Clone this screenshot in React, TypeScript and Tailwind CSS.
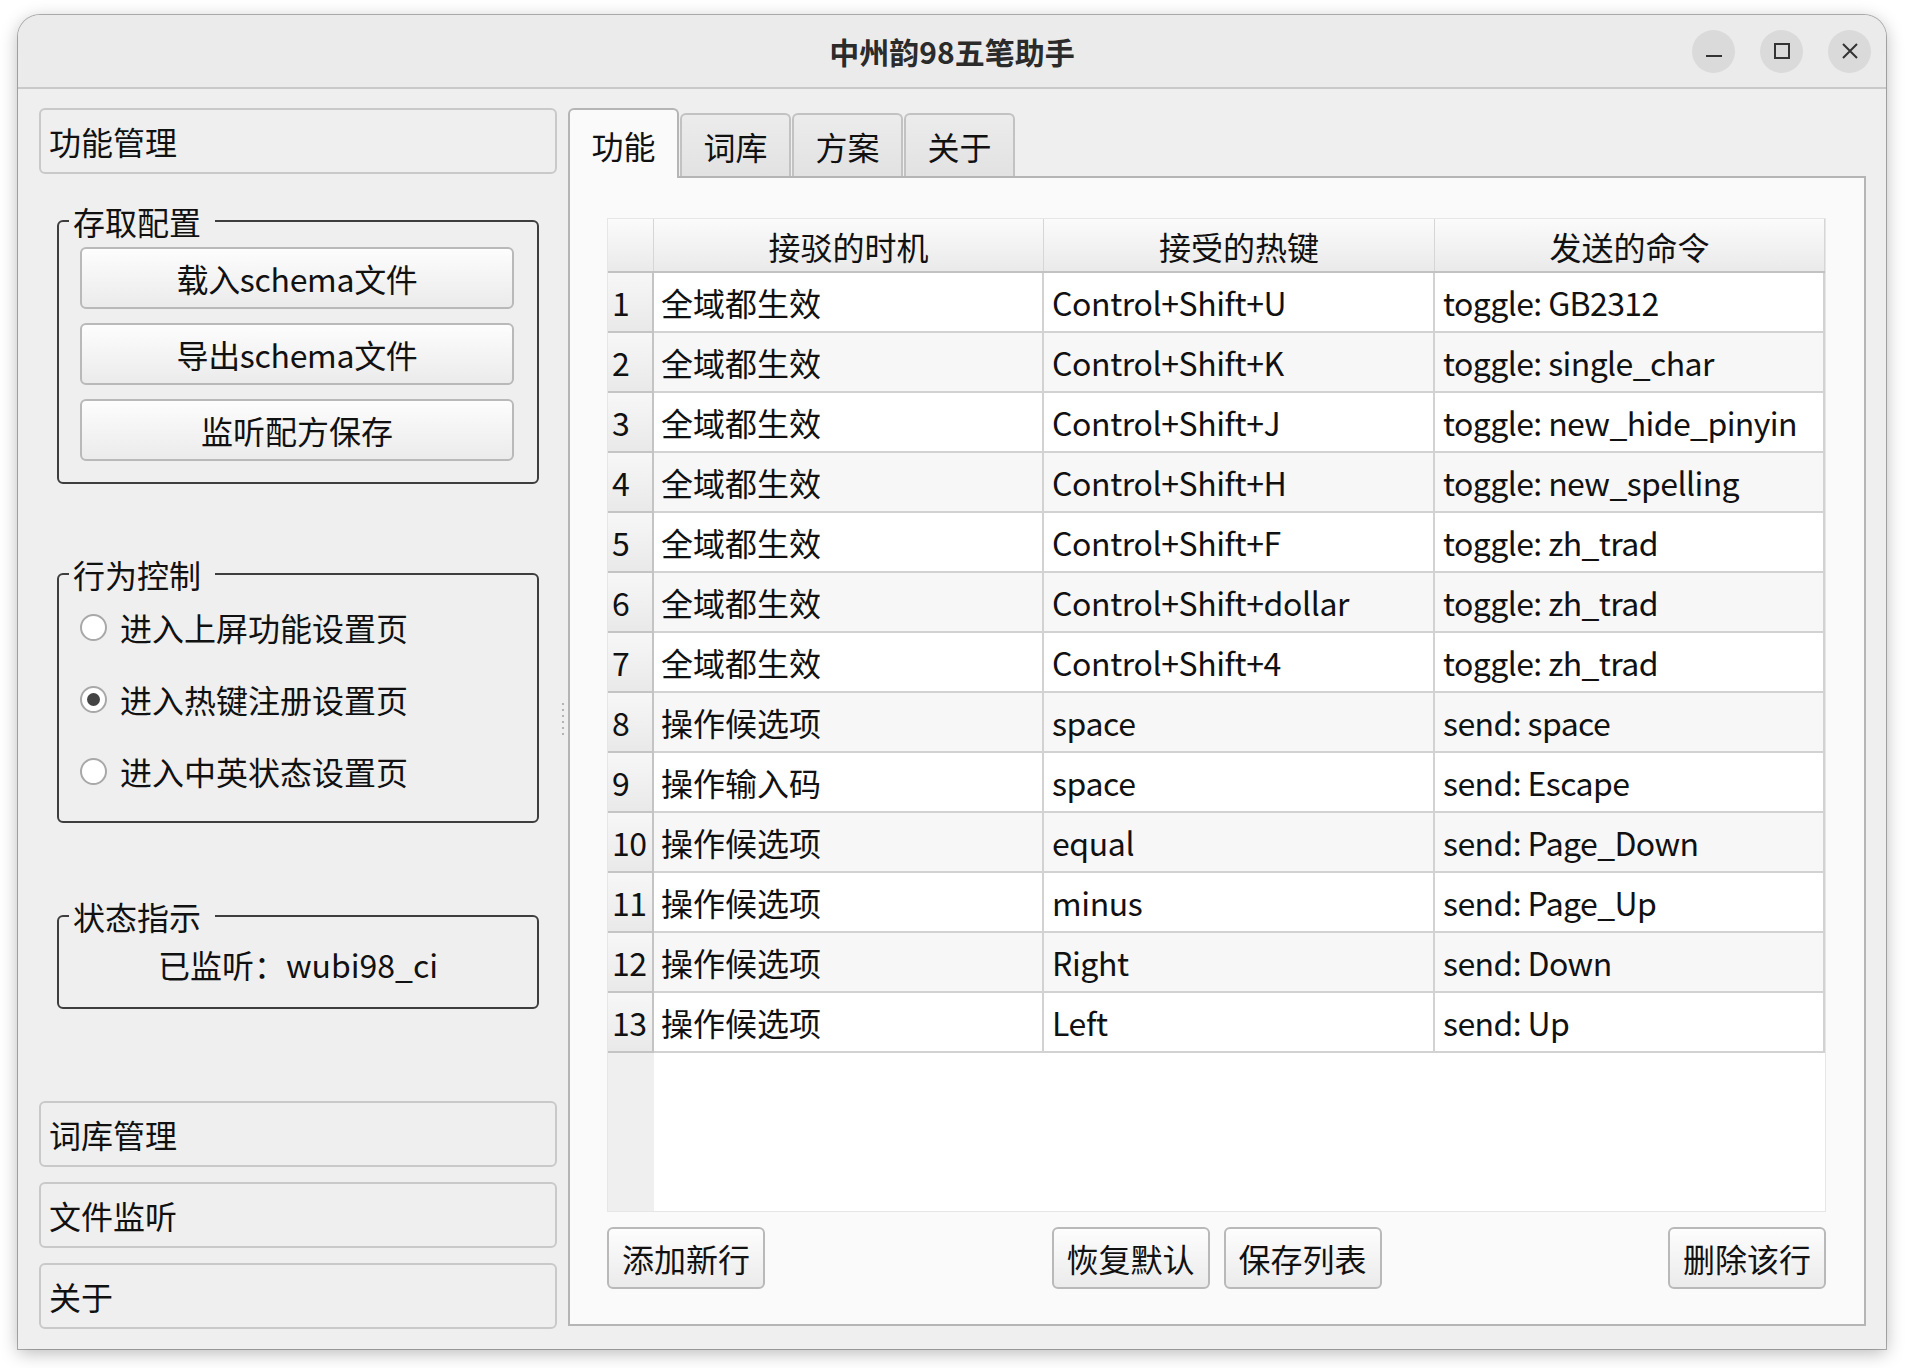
import React from "react";

const rows: [string, string, string][] = [
  ["全域都生效", "Control+Shift+U", "toggle: GB2312"],
  ["全域都生效", "Control+Shift+K", "toggle: single_char"],
  ["全域都生效", "Control+Shift+J", "toggle: new_hide_pinyin"],
  ["全域都生效", "Control+Shift+H", "toggle: new_spelling"],
  ["全域都生效", "Control+Shift+F", "toggle: zh_trad"],
  ["全域都生效", "Control+Shift+dollar", "toggle: zh_trad"],
  ["全域都生效", "Control+Shift+4", "toggle: zh_trad"],
  ["操作候选项", "space", "send: space"],
  ["操作输入码", "space", "send: Escape"],
  ["操作候选项", "equal", "send: Page_Down"],
  ["操作候选项", "minus", "send: Page_Up"],
  ["操作候选项", "Right", "send: Down"],
  ["操作候选项", "Left", "send: Up"],
];

const headers = ["接驳的时机", "接受的热键", "发送的命令"];

function PushButton({ children, className = "" }: { children: React.ReactNode; className?: string }) {
  return (
    <button
      className={`flex h-[62px] items-center justify-center rounded-[6px] border-2 border-[#b9b9b9] bg-gradient-to-b from-[#fdfdfd] to-[#ebebeb] text-[32px] leading-none text-[#111] ${className}`}
    >
      {children}
    </button>
  );
}

function ToolboxTab({ label, className = "" }: { label: string; className?: string }) {
  return (
    <div
      className={`flex h-[66px] items-center rounded-[6px] border-2 border-[#c9c9c9] bg-[#efefef] pl-[8px] text-[32px] text-[#111] ${className}`}
    >
      {label}
    </div>
  );
}

function GroupBox({ title, children, className = "" }: { title: string; children: React.ReactNode; className?: string }) {
  return (
    <fieldset className={`mx-[18px] rounded-[6px] border-2 border-[#3e3e3e] ${className}`}>
      <legend className="ml-[10px] pl-[4px] pr-[14px] text-[32px] leading-[38px] text-[#111]">{title}</legend>
      {children}
    </fieldset>
  );
}

function Radio({ label, checked = false }: { label: string; checked?: boolean }) {
  return (
    <div className="flex h-[66px] items-center gap-[13px]">
      <span className="flex h-[27px] w-[27px] items-center justify-center rounded-full border-2 border-[#a8a8a8] bg-white">
        {checked && <span className="h-[13px] w-[13px] rounded-full bg-[#444]" />}
      </span>
      <span className="text-[32px] leading-[40px] text-[#111]">{label}</span>
    </div>
  );
}

function WinButton({ children }: { children: React.ReactNode }) {
  return (
    <div className="flex h-[43px] w-[43px] items-center justify-center rounded-full bg-[#dadada]">
      <svg width="16" height="16" viewBox="0 0 16 16" fill="none" stroke="#333" strokeWidth="2">
        {children}
      </svg>
    </div>
  );
}

export default function App() {
  return (
    <div className="h-[1368px] w-full bg-white pl-[18px] pt-[15px] font-['Noto_Sans_CJK_SC',sans-serif] text-[#111]">
      <div className="flex h-[1334px] w-[1868px] flex-col rounded-t-[22px] bg-[#efefef] shadow-[0_0_0_1px_rgba(0,0,0,0.28),0_4px_18px_rgba(0,0,0,0.28)]">
        {/* title bar */}
        <div className="grid h-[74px] grid-cols-[1fr_auto_1fr] items-center rounded-t-[22px] border-b-2 border-[#c9c9c9] bg-[#ebebeb]">
          <div />
          <div className="text-[30px] font-bold leading-none text-[#2b2b2b]">中州韵98五笔助手</div>
          <div className="flex justify-end gap-[25px] pr-[15px]">
            <WinButton>
              <line x1="0" y1="13" x2="16" y2="13" />
            </WinButton>
            <WinButton>
              <rect x="1" y="1" width="14" height="14" />
            </WinButton>
            <WinButton>
              <path d="M1 1 L15 15 M15 1 L1 15" />
            </WinButton>
          </div>
        </div>

        {/* body */}
        <div className="flex flex-1">
          {/* left toolbox */}
          <div className="flex w-[539px] flex-col pb-[20px] pl-[21px] pt-[19px]">
            <ToolboxTab label="功能管理" />

            <GroupBox title="存取配置" className="mt-[28px]">
              <div className="flex flex-col gap-[14px] pb-[21px] pl-[21px] pr-[23px] pt-[7px]">
                <PushButton className="tracking-[-0.3px]">载入schema文件</PushButton>
                <PushButton className="tracking-[-0.3px]">导出schema文件</PushButton>
                <PushButton>监听配方保存</PushButton>
              </div>
            </GroupBox>

            <GroupBox title="行为控制" className="mt-[71px]">
              <div className="flex flex-col gap-[6px] pb-[17px] pl-[21px] pt-[1px]">
                <Radio label="进入上屏功能设置页" />
                <Radio label="进入热键注册设置页" checked />
                <Radio label="进入中英状态设置页" />
              </div>
            </GroupBox>

            <GroupBox title="状态指示" className="mt-[74px]">
              <div className="pb-[23px] pt-[9px] text-center text-[32px] leading-[40px]">已监听：wubi98_ci</div>
            </GroupBox>

            <div className="mt-auto flex flex-col gap-[15px]">
              <ToolboxTab label="词库管理" className="h-[65px]" />
              <ToolboxTab label="文件监听" className="h-[65px]" />
              <ToolboxTab label="关于" className="h-[65px]" />
            </div>
          </div>

          {/* splitter */}
          <div className="flex w-[11px] flex-col items-center justify-center gap-[4px] pl-[1px]">
            {[0, 1, 2, 3, 4, 5].map((d) => (
              <span key={d} className="h-[2px] w-[2px] bg-[#b3b3b3]" />
            ))}
          </div>

          {/* tab widget */}
          <div className="flex w-[1298px] flex-col pb-[23px] pt-[19px]">
            <div className="flex h-[68px] items-end">
              <div className="relative z-10 -mb-[2px] flex h-[70px] w-[111px] items-center justify-center rounded-t-[6px] border-2 border-b-0 border-[#b5b5b5] bg-[#fafafa] pt-[2px] text-[32px]">
                功能
              </div>
              {["词库", "方案", "关于"].map((t) => (
                <div
                  key={t}
                  className="ml-[1px] flex h-[63px] w-[111px] items-center justify-center rounded-t-[6px] border-2 border-b-0 border-[#c2c2c2] bg-gradient-to-b from-[#ececec] to-[#e2e2e2] pt-[1px] text-[32px]"
                >
                  {t}
                </div>
              ))}
            </div>

            <div className="flex flex-1 flex-col border-2 border-[#b5b5b5] bg-[#fafafa] pb-[35px] pl-[37px] pr-[38px] pt-[40px]">
              {/* table */}
              <div className="flex flex-1 flex-col border border-[#e6e6e6] bg-white text-[32px]">
                <div className="grid h-[54px] grid-cols-[46px_390px_391px_1fr] border-b-2 border-[#c2c2c2] bg-gradient-to-b from-[#fbfbfb] to-[#eaeaea]">
                  <div className="border-r border-[#d6d6d6]" />
                  {headers.map((h) => (
                    <div key={h} className="flex items-center justify-center border-r border-[#d6d6d6] pt-[2px]">
                      {h}
                    </div>
                  ))}
                </div>
                {rows.map((r, i) => (
                  <div
                    key={i}
                    className={`grid h-[60px] grid-cols-[46px_390px_391px_1fr] ${i % 2 ? "bg-[#f7f7f7]" : "bg-white"}`}
                  >
                    <div className="flex items-center border-b-2 border-r-2 border-[#c4c4c4] bg-gradient-to-b from-[#f7f7f7] to-[#e9e9e9] pl-[4px] tracking-[-0.5px]">
                      {i + 1}
                    </div>
                    <div className="flex items-center border-b-2 border-r-2 border-[#d2d2d2] pl-[7px]">{r[0]}</div>
                    <div className="flex items-center border-b-2 border-r-2 border-[#d2d2d2] pl-[8px] tracking-[-0.4px]">{r[1]}</div>
                    <div className="flex items-center border-b-2 border-r-2 border-[#d2d2d2] pl-[8px] tracking-[-0.6px]">{r[2]}</div>
                  </div>
                ))}
                <div className="flex flex-1">
                  <div className="w-[46px] bg-[#efefef]" />
                  <div className="flex-1 bg-white" />
                </div>
              </div>

              <div className="mt-[15px] flex items-center justify-between">
                <PushButton className="w-[158px]">添加新行</PushButton>
                <div className="flex gap-[14px]">
                  <PushButton className="w-[158px]">恢复默认</PushButton>
                  <PushButton className="w-[158px]">保存列表</PushButton>
                </div>
                <PushButton className="w-[158px]">删除该行</PushButton>
              </div>
            </div>
          </div>
        </div>
      </div>
    </div>
  );
}
